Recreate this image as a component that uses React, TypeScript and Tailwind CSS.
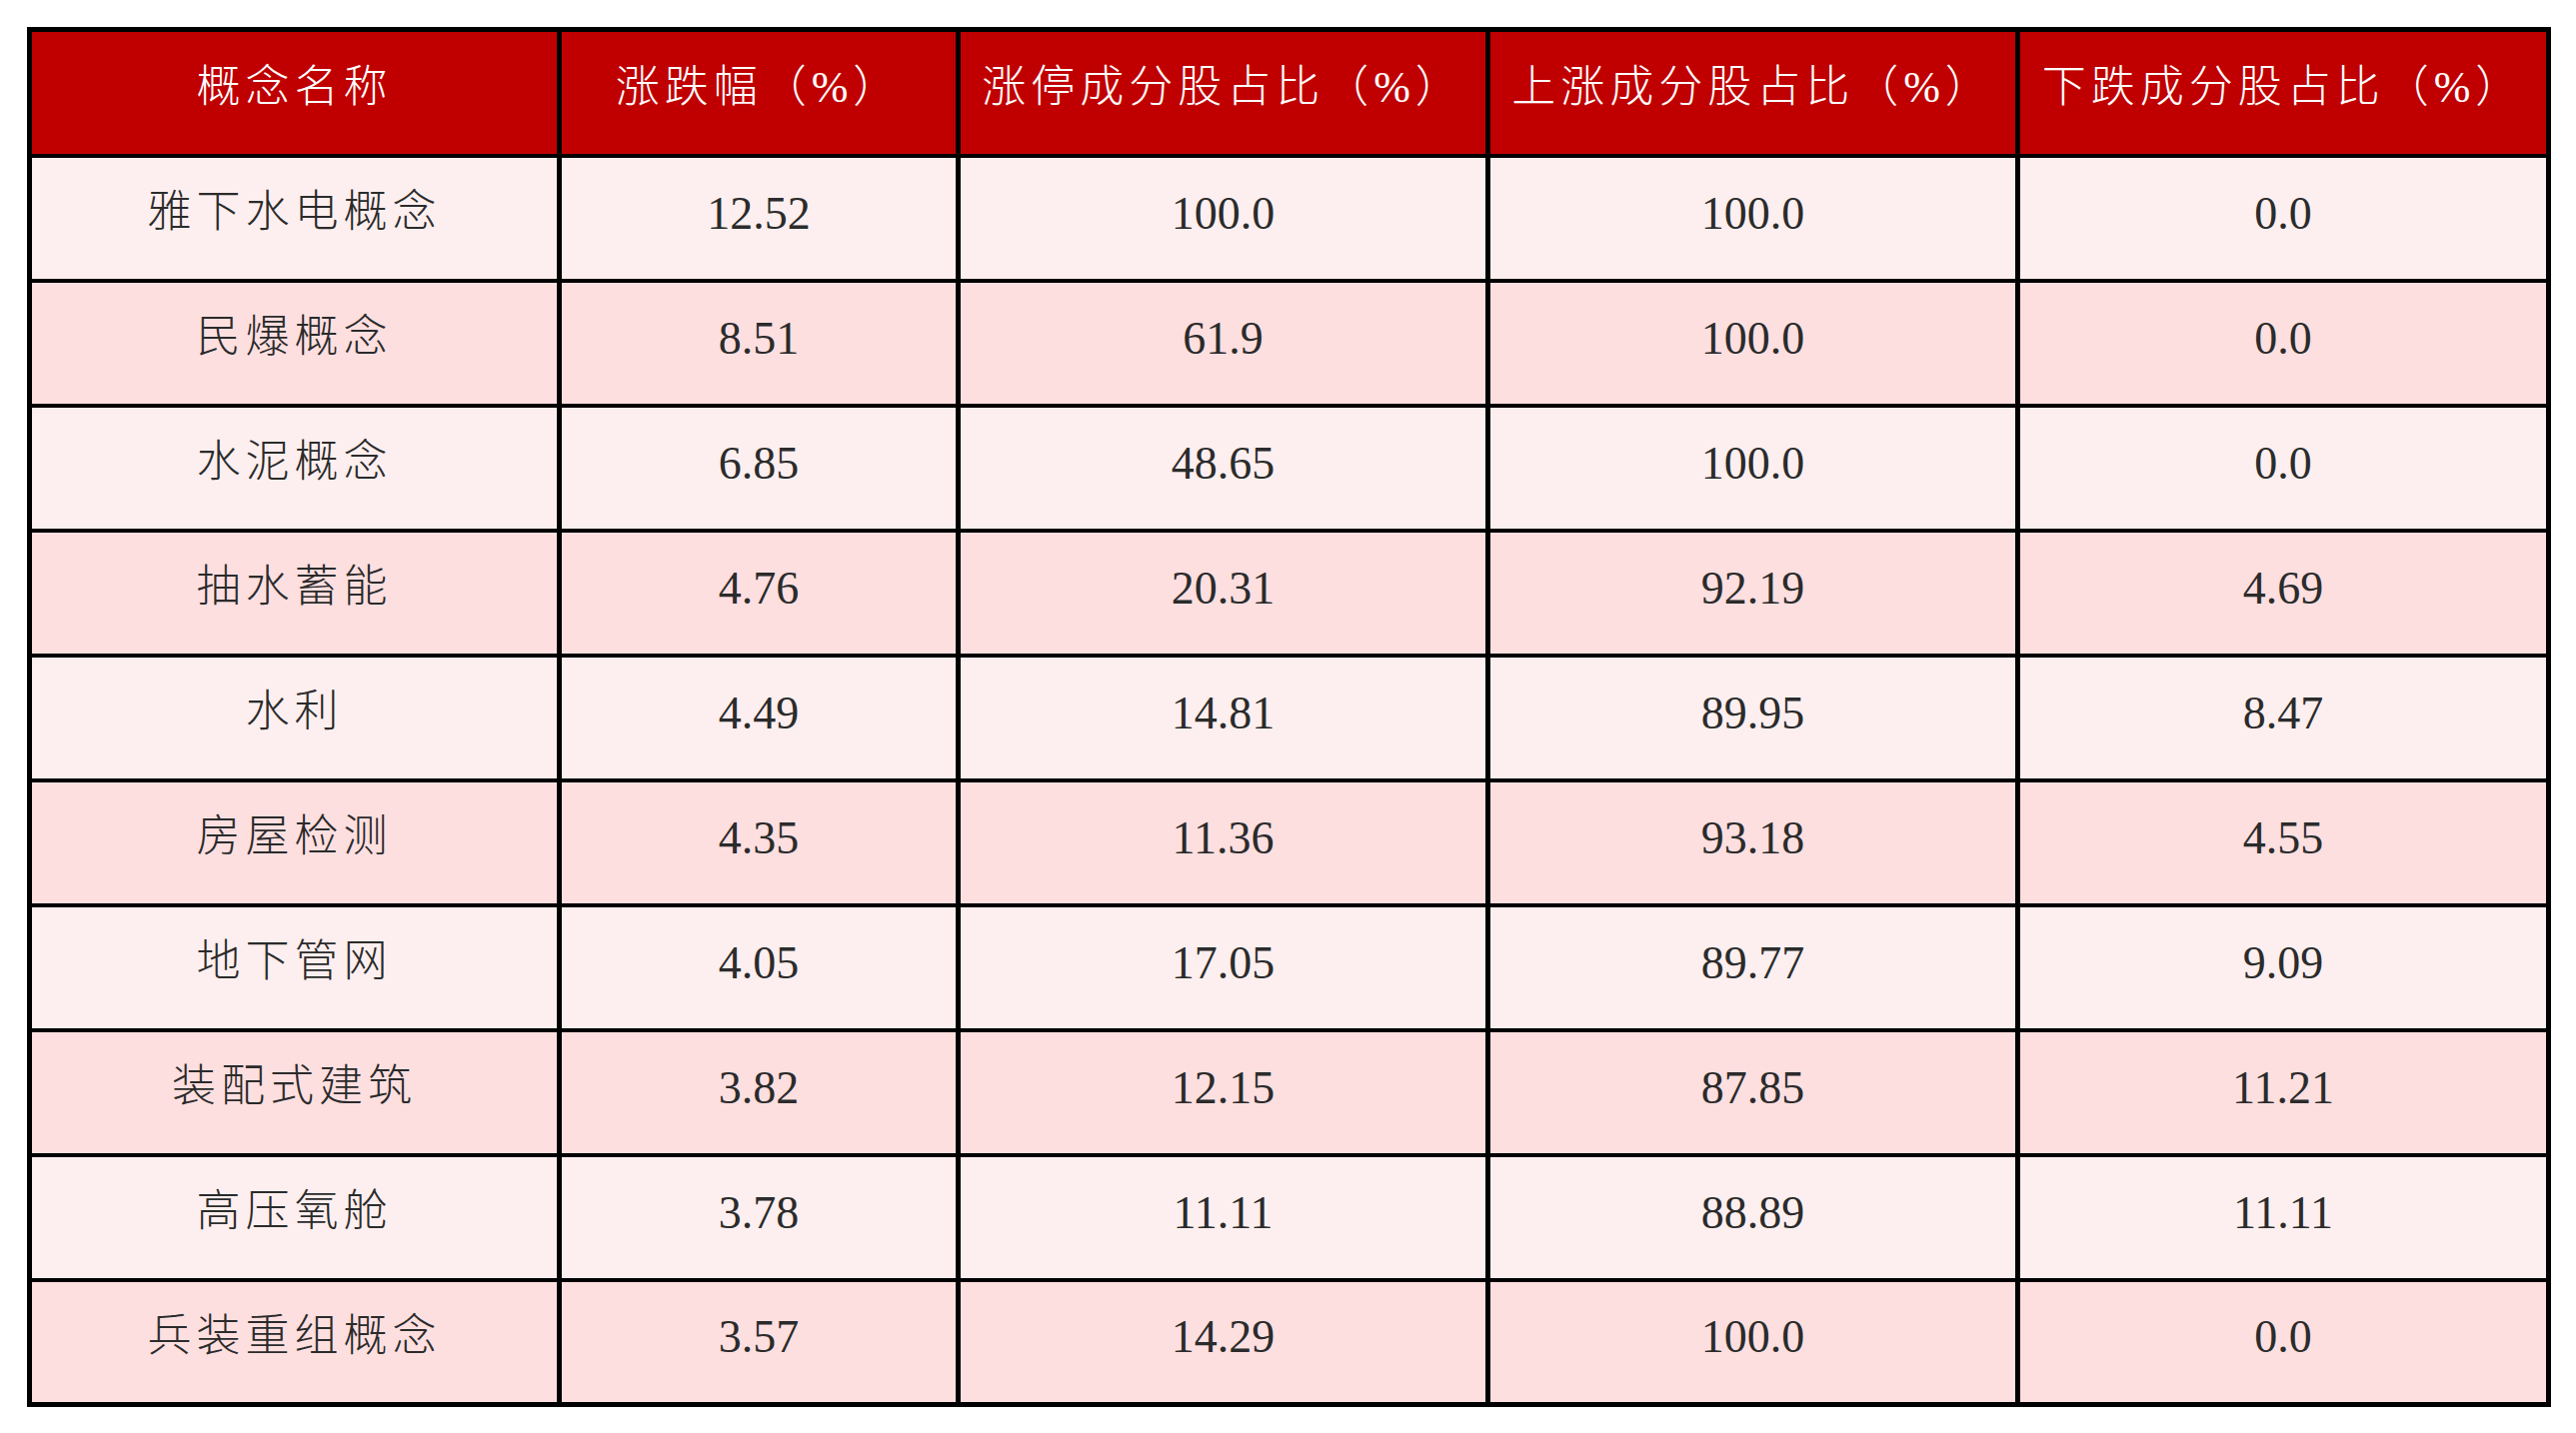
const headers = ['概念名称', '涨跌幅（%）', '涨停成分股占比（%）', '上涨成分股占比（%）', '下跌成分股占比（%）'];

const rows: [string, string, string, string, string][] = [
    ['雅下水电概念', '12.52', '100.0', '100.0', '0.0'],
    ['民爆概念', '8.51', '61.9', '100.0', '0.0'],
    ['水泥概念', '6.85', '48.65', '100.0', '0.0'],
    ['抽水蓄能', '4.76', '20.31', '92.19', '4.69'],
    ['水利', '4.49', '14.81', '89.95', '8.47'],
    ['房屋检测', '4.35', '11.36', '93.18', '4.55'],
    ['地下管网', '4.05', '17.05', '89.77', '9.09'],
    ['装配式建筑', '3.82', '12.15', '87.85', '11.21'],
    ['高压氧舱', '3.78', '11.11', '88.89', '11.11'],
    ['兵装重组概念', '3.57', '14.29', '100.0', '0.0'],
];

export default function App() {
    return (
        <div className="w-[2577px] h-[1434px] bg-white pt-[27px] pl-[27px] font-['Liberation_Serif','Noto_Sans_CJK_SC',serif]">
            <table className="table-fixed border-collapse w-[2523px] border-[5px] border-black">
                <colgroup>
                    <col className="w-[530px]" />
                    <col className="w-[399px]" />
                    <col className="w-[530px]" />
                    <col className="w-[530px]" />
                    <col className="w-[531px]" />
                </colgroup>
                <thead>
                    <tr className="h-[126px] bg-[#c00000]">
                        {headers.map((h) => (
                            <th
                                key={h}
                                className="border-x-[5px] border-y-[4px] border-black pb-[10px] text-white font-light text-[44px] tracking-[5px] text-center align-middle"
                            >
                                {h}
                            </th>
                        ))}
                    </tr>
                </thead>
                <tbody>
                    {rows.map((r, i) => (
                        <tr key={r[0]} className={i % 2 === 0 ? 'h-[125px] bg-[#fdefef]' : 'h-[125px] bg-[#fddfe0]'}>
                            {r.map((c, j) => (
                                <td
                                    key={j}
                                    className={
                                        j === 0
                                            ? 'border-x-[5px] border-y-[4px] border-black pb-[10px] text-[#2b2b2b] font-light text-[44px] tracking-[5px] text-center align-middle'
                                            : 'border-x-[5px] border-y-[4px] border-black pb-[10px] text-[#2b2b2b] text-[46px] text-center align-middle'
                                    }
                                >
                                    {c}
                                </td>
                            ))}
                        </tr>
                    ))}
                </tbody>
            </table>
        </div>
    );
}
